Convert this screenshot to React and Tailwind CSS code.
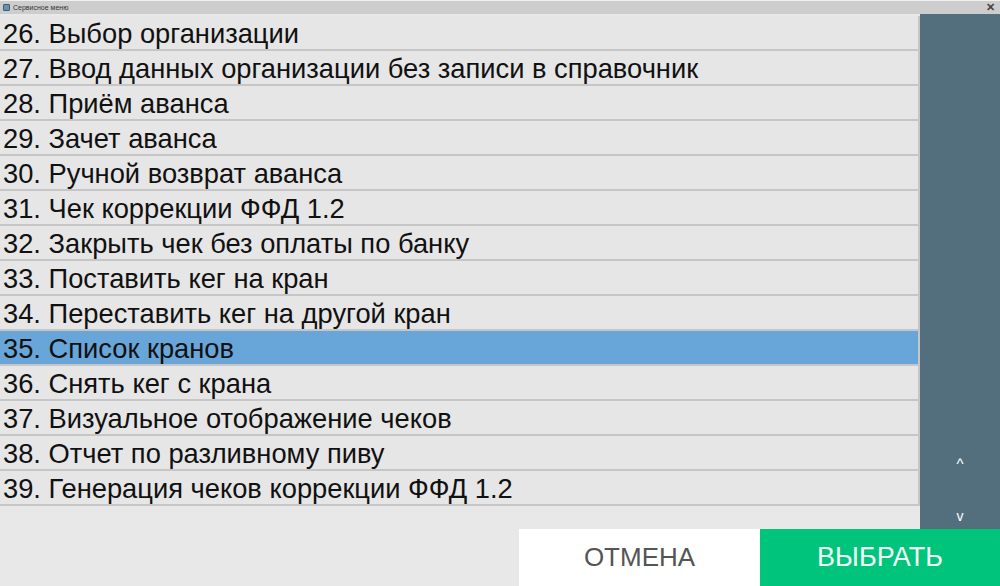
import React, { useState } from 'react';

const items = [
  '26. Выбор организации',
  '27. Ввод данных организации без записи в справочник',
  '28. Приём аванса',
  '29. Зачет аванса',
  '30. Ручной возврат аванса',
  '31. Чек коррекции ФФД 1.2',
  '32. Закрыть чек без оплаты по банку',
  '33. Поставить кег на кран',
  '34. Переставить кег на другой кран',
  '35. Список кранов',
  '36. Снять кег с крана',
  '37. Визуальное отображение чеков',
  '38. Отчет по разливному пиву',
  '39. Генерация чеков коррекции ФФД 1.2',
];

const App = () => {
  const [selected, setSelected] = useState(9);

  return (
    <div className="w-[1000px] h-[586px] flex flex-col bg-[#e8e8e8] overflow-hidden" style={{ fontFamily: '"Liberation Sans", Arial, sans-serif' }}>
      {/* title bar */}
      <div className="h-[14px] flex items-center justify-between bg-[#cdcdcd] border-t border-[#f0f0f0] px-[3px]">
        <div className="flex items-center gap-[3px]">
          <div className="w-[7px] h-[7px] rounded-[1px] bg-[#6b8fb0] border border-[#3e5e7a]" />
          <span className="text-[7px] leading-none text-[#333]">Сервисное меню</span>
        </div>
        <span className="text-[11px] leading-none font-bold text-[#444] mr-[2px]">✕</span>
      </div>

      <div className="flex h-[515px]">
        {/* list */}
        <div className="w-[920px] pt-[2px] flex flex-col">
          {items.map((item, i) => (
            <div
              key={item}
              onClick={() => setSelected(i)}
              className={`h-[35px] flex items-center pl-[3px] pt-[3px] border-b-2 border-r-2 border-[#c6c6c6] text-[27.3px] leading-none text-[#111] cursor-pointer ${
                i === selected ? 'bg-[#68a6d9]' : 'bg-[#e6e6e6]'
              }`}
            >
              {item}
            </div>
          ))}
        </div>

        {/* scroll panel */}
        <div className="flex-1 bg-[#536f7e] flex flex-col justify-end items-center text-white pb-[6px]">
          <span className="text-[15px] leading-none mb-[38px]">^</span>
          <span className="text-[14px] leading-none">v</span>
        </div>
      </div>

      {/* buttons */}
      <div className="flex-1 flex justify-end">
        <button className="w-[241px] bg-white text-[#555] text-[26px]">ОТМЕНА</button>
        <button className="w-[240px] bg-[#00c47b] text-[#f2fff8] text-[27px]">ВЫБРАТЬ</button>
      </div>
    </div>
  );
};

export default App;
